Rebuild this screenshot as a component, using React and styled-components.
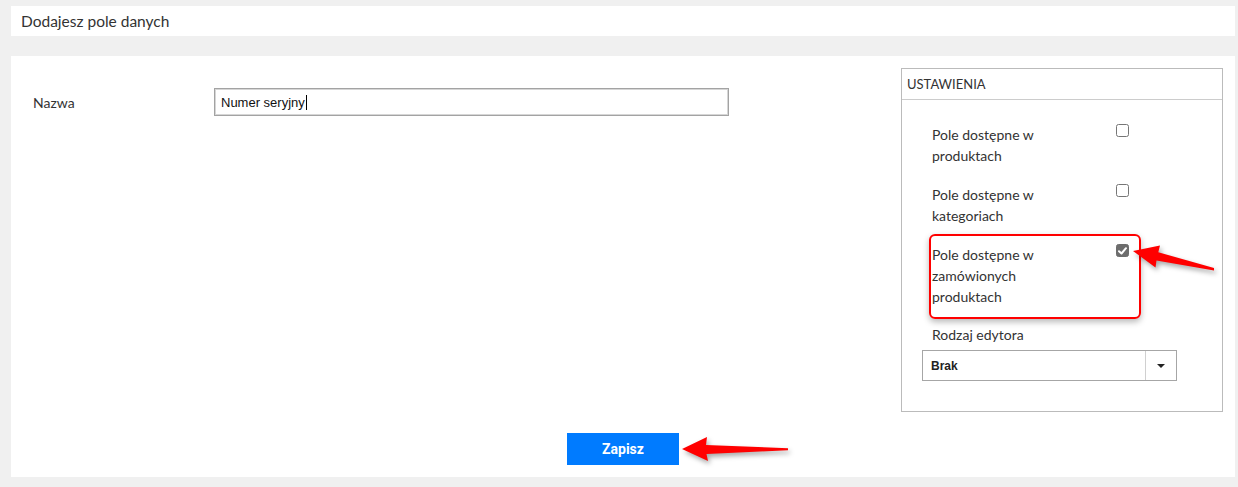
import React from "react";
import styled, { createGlobalStyle } from "styled-components";

const Global = createGlobalStyle`
  html, body { margin: 0; padding: 0; background: #f0f0f0; }
  body { font-family: Lato, "Open Sans", sans-serif; color: #333; }
  * { box-sizing: border-box; }
`;

const Page = styled.div`
  padding: 6px 3px 10px 11px;
  width: 1238px;
`;

const HeaderBar = styled.div`
  height: 30px;
  background: #fff;
  display: flex;
  align-items: center;
  padding-left: 10px;
  font-size: 15.5px;
  color: #333;
`;

const Panel = styled.div`
  margin-top: 20px;
  background: #fff;
  padding: 12px;
  display: flex;
  flex-direction: column;
`;

const ContentRow = styled.div`
  display: flex;
  align-items: flex-start;
`;

const FormArea = styled.div`
  flex: 1;
  padding: 20px 0 0 10px;
`;

const FieldRow = styled.div`
  display: flex;
  align-items: center;
`;

const FieldLabel = styled.div`
  width: 181px;
  font-size: 14px;
  line-height: 20px;
  padding-top: 2px;
`;

const InputBox = styled.div`
  width: 515px;
  height: 28px;
  border: 1px solid #a3a3a3;
  box-shadow: inset 0 0 0 1px #d6d6d6;
  display: flex;
  align-items: center;
  padding-left: 6px;
  font-family: "Liberation Sans", Arial, sans-serif;
  font-size: 13px;
  color: #111;
`;

const Caret = styled.span`
  display: inline-block;
  width: 1px;
  height: 15px;
  background: #000;
  margin-left: 1px;
`;

const SettingsBox = styled.div`
  position: relative;
  width: 322px;
  border: 1px solid #bbb;
`;

const BoxHeader = styled.div`
  height: 31px;
  border-bottom: 1px solid #ccc;
  padding-left: 5px;
  display: flex;
  align-items: center;
  font-size: 13px;
  text-transform: uppercase;
  color: #333;
`;

const BoxBody = styled.div`
  padding: 24px 20px 30px;
`;

const ItemRow = styled.div`
  position: relative;
  display: flex;
  align-items: flex-start;
  padding-left: 10px;
  margin-bottom: 18px;
`;

const ItemLabel = styled.div`
  width: 184px;
  padding-right: 62px;
  font-size: 14px;
  line-height: 21px;
  color: #333;
`;

const Check = styled.span`
  width: 13px;
  height: 13px;
  border-radius: 2.5px;
  border: 1px solid ${(p) => (p.$checked ? "#6d6d6d" : "#767676")};
  background: ${(p) => (p.$checked ? "#6d6d6d" : "#fff")};
  display: flex;
  align-items: center;
  justify-content: center;
  flex-shrink: 0;
`;

const Highlight = styled.div`
  position: absolute;
  left: 7px;
  top: -10px;
  width: 212px;
  height: 85px;
  border: 2px solid #f00;
  border-radius: 6px;
  box-shadow: 0 3px 6px rgba(0, 0, 0, 0.28);
  pointer-events: none;
`;

const EditorLabel = styled.div`
  padding-left: 10px;
  font-size: 14px;
  line-height: 20px;
  margin-bottom: 5px;
`;

const Select = styled.div`
  width: 255px;
  height: 31px;
  border: 1px solid #a6a6a6;
  display: flex;
  align-items: stretch;
`;

const SelectValue = styled.div`
  flex: 1;
  display: flex;
  align-items: center;
  padding-left: 8px;
  font-family: "Liberation Sans", Arial, sans-serif;
  font-weight: bold;
  font-size: 12px;
  color: #222;
`;

const SelectToggle = styled.div`
  width: 31px;
  border-left: 1px solid #d0d0d0;
  display: flex;
  align-items: center;
  justify-content: center;
`;

const Caretdown = styled.span`
  width: 0;
  height: 0;
  border-left: 4px solid transparent;
  border-right: 4px solid transparent;
  border-top: 4px solid #222;
  margin-top: 1px;
`;

const Footer = styled.div`
  position: relative;
  margin-top: 21px;
  display: flex;
  justify-content: center;
`;

const SaveButton = styled.button`
  width: 112px;
  height: 32px;
  border: none;
  background: #007bff;
  color: #fff;
  font-family: Roboto, "Liberation Sans", sans-serif;
  font-weight: bold;
  font-size: 14px;
  padding: 0;
`;

const ArrowSvg = styled.svg`
  position: absolute;
  left: ${(p) => p.$left};
  top: ${(p) => p.$top};
  overflow: visible;
  filter: drop-shadow(2px 3px 2.5px rgba(0, 0, 0, 0.35));
  pointer-events: none;
`;

const CheckMark = () => (
  <svg width="9" height="8" viewBox="0 0 9 8">
    <path d="M1 4.2 L3.5 6.5 L8 1.2" fill="none" stroke="#fff" strokeWidth="2" strokeLinecap="round" strokeLinejoin="round" />
  </svg>
);

const items = [
  { label: "Pole dostępne w produktach", checked: false },
  { label: "Pole dostępne w kategoriach", checked: false },
  { label: "Pole dostępne w zamówionych produktach", checked: true, highlight: true },
];

export default function App() {
  return (
    <>
      <Global />
      <Page>
        <HeaderBar>Dodajesz pole danych</HeaderBar>
        <Panel>
          <ContentRow>
            <FormArea>
              <FieldRow>
                <FieldLabel>Nazwa</FieldLabel>
                <InputBox>
                  Numer seryjny
                  <Caret />
                </InputBox>
              </FieldRow>
            </FormArea>
            <SettingsBox>
              <BoxHeader>Ustawienia</BoxHeader>
              <BoxBody>
                {items.map((it, i) => (
                  <ItemRow key={i}>
                    <ItemLabel>{it.label}</ItemLabel>
                    <Check $checked={it.checked}>{it.checked && <CheckMark />}</Check>
                    {it.highlight && <Highlight />}
                  </ItemRow>
                ))}
                <EditorLabel>Rodzaj edytora</EditorLabel>
                <Select>
                  <SelectValue>Brak</SelectValue>
                  <SelectToggle>
                    <Caretdown />
                  </SelectToggle>
                </Select>
              </BoxBody>
              <ArrowSvg $left="224px" $top="162px" width="100" height="50" viewBox="0 0 100 50">
                <polygon
                  points="7,20 34,14.5 32.3,21.3 88,37 88,39.5 30.5,29.5 29.5,36.5"
                  fill="#f00"
                />
              </ArrowSvg>
            </SettingsBox>
          </ContentRow>
          <Footer>
            <SaveButton>Zapisz</SaveButton>
            <ArrowSvg $left="calc(50% + 55px)" $top="-3px" width="115" height="40" viewBox="0 0 115 40">
              <polygon points="4,19 29,7 28,15 110,18.3 110,20.3 28.5,24 30,31" fill="#f00" />
            </ArrowSvg>
          </Footer>
        </Panel>
      </Page>
    </>
  );
}
